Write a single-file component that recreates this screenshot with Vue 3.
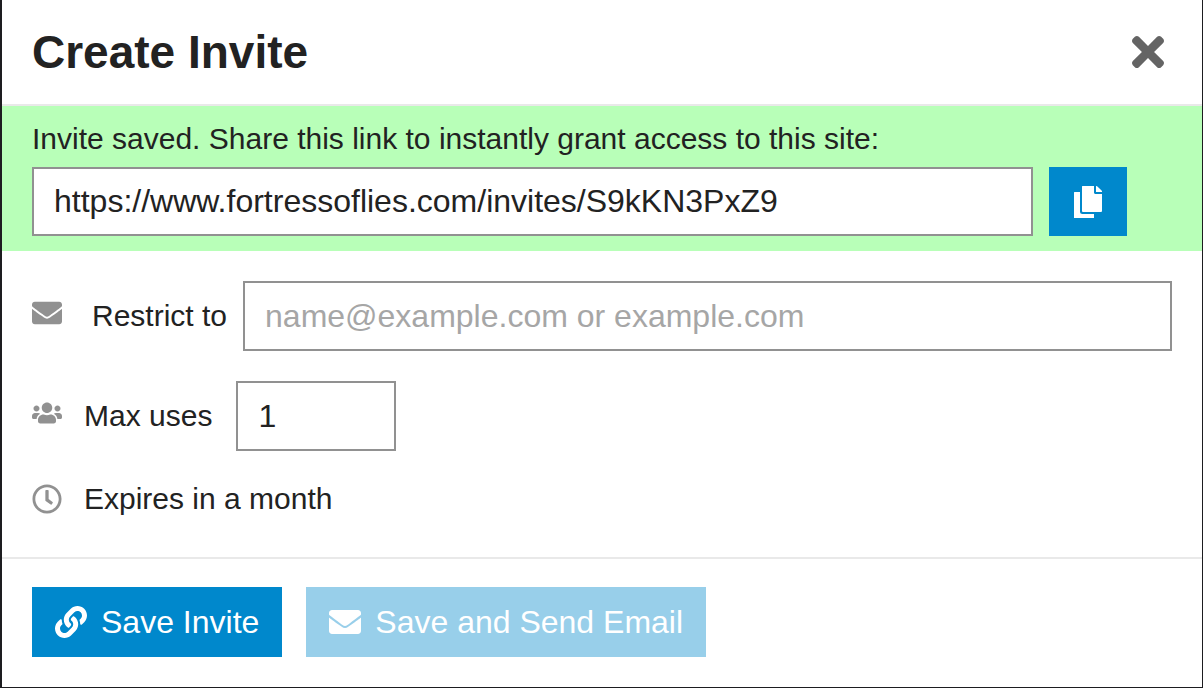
<script setup>
import { ref } from 'vue'

const link = ref('https://www.fortressoflies.com/invites/S9kKN3PxZ9')
const restrictTo = ref('')
const maxUses = ref('1')

const envelope =
  'M502.3 190.8c3.9-3.1 9.7-.2 9.7 4.7V400c0 26.5-21.5 48-48 48H48c-26.5 0-48-21.5-48-48V195.6c0-5 5.7-7.8 9.7-4.7 22.4 17.4 52.1 39.5 154.1 113.6 21.1 15.4 56.7 47.8 92.2 47.6 35.7.3 72-32.8 92.3-47.6 102-74.1 131.6-96.3 154-113.7zM256 320c23.2.4 56.6-29.2 73.4-41.4 132.7-96.3 142.8-104.7 173.4-128.7 5.8-4.5 9.2-11.5 9.2-18.9v-19c0-26.5-21.5-48-48-48H48c-26.5 0-48 21.5-48 48v19c0 7.4 3.4 14.3 9.2 18.9 30.6 23.9 40.7 32.4 173.4 128.7 16.8 12.2 50.2 41.8 73.4 41.4z'
</script>

<template>
  <section class="modal" aria-labelledby="modal-title">
    <header class="modal-header">
      <h1 id="modal-title">Create Invite</h1>
      <button type="button" class="close" aria-label="Close">
        <svg viewBox="0 80 352 352" aria-hidden="true">
          <path d="M242.72 256l100.07-100.07c12.28-12.28 12.28-32.19 0-44.48l-22.24-22.24c-12.28-12.28-32.19-12.28-44.48 0L176 189.28 75.93 89.21c-12.28-12.28-32.19-12.28-44.48 0L9.21 111.45c-12.28 12.28-12.28 32.19 0 44.48L109.28 256 9.21 356.07c-12.28 12.28-12.28 32.19 0 44.48l22.24 22.24c12.28 12.28 32.2 12.28 44.48 0L176 322.72l100.07 100.07c12.28 12.28 32.2 12.28 44.48 0l22.24-22.24c12.28-12.28 12.28-32.19 0-44.48L242.72 256z" />
        </svg>
      </button>
    </header>

    <div class="alert">
      <label for="invite-link">Invite saved. Share this link to instantly grant access to this site:</label>
      <div class="share">
        <input id="invite-link" v-model="link" class="field" type="text" readonly />
        <button type="button" class="btn copy" aria-label="Copy link">
          <svg class="btn-icon" viewBox="0 0 512 512" aria-hidden="true">
            <path d="M352 448v56a8 8 0 0 1-8 8H40a8 8 0 0 1-8-8V104a8 8 0 0 1 8-8h88v312a40 40 0 0 0 40 40h184zM352 104V0H168a8 8 0 0 0-8 8v392a16 16 0 0 0 16 16h288a16 16 0 0 0 16-16V128H376c-13.2 0-24-10.8-24-24zm121-31L407 7a24 24 0 0 0-17-7h-6v96h96v-6a24 24 0 0 0-7-17z" />
          </svg>
        </button>
      </div>
    </div>

    <form class="modal-body" @submit.prevent>
      <div class="row">
        <svg class="icon raised" viewBox="0 0 512 512" aria-hidden="true"><path :d="envelope" /></svg>
        <label class="indented" for="restrict-to">Restrict to</label>
        <input id="restrict-to" v-model="restrictTo" class="field grow" type="text" placeholder="name@example.com or example.com" />
      </div>
      <div class="row">
        <svg class="icon raised" viewBox="0 0 640 512" aria-hidden="true">
          <path d="M96 224c35.3 0 64-28.7 64-64s-28.7-64-64-64-64 28.7-64 64 28.7 64 64 64zm448 0c35.3 0 64-28.7 64-64s-28.7-64-64-64-64 28.7-64 64 28.7 64 64 64zm32 32h-64c-17.6 0-33.5 7.1-45.1 18.6 40.3 22.1 68.9 62 75.1 109.4h66c17.7 0 32-14.3 32-32v-32c0-35.3-28.7-64-64-64zm-256 0c61.9 0 112-50.1 112-112S381.9 32 320 32 208 82.1 208 144s50.1 112 112 112zm76.8 32h-8.3c-20.8 10-43.9 16-68.5 16s-47.6-6-68.5-16h-8.3C179.6 288 128 339.6 128 403.2V432c0 26.5 21.5 48 48 48h288c26.5 0 48-21.5 48-48v-28.8c0-63.6-51.6-115.2-115.2-115.2zm-223.7-13.4C161.5 263.1 145.6 256 128 256H64c-35.3 0-64 28.7-64 64v32c0 17.7 14.3 32 32 32h65.9c6.3-47.4 34.9-87.3 75.2-109.4z" />
        </svg>
        <label for="max-uses">Max uses</label>
        <input id="max-uses" v-model="maxUses" class="field uses" type="text" inputmode="numeric" />
      </div>
      <div class="row">
        <svg class="icon" viewBox="0 0 512 512" aria-hidden="true">
          <path d="M256 8C119 8 8 119 8 256s111 248 248 248 248-111 248-248S393 8 256 8zm0 448c-110.5 0-200-89.5-200-200S145.5 56 256 56s200 89.5 200 200-89.5 200-200 200zm61.8-104.4l-84.9-61.7c-3.1-2.3-4.9-5.9-4.9-9.7V116c0-6.6 5.4-12 12-12h32c6.6 0 12 5.4 12 12v141.7l66.8 48.6c5.4 3.9 6.5 11.4 2.6 16.8L334.6 349c-3.9 5.3-11.4 6.5-16.8 2.6z" />
        </svg>
        <span>Expires in a month</span>
      </div>
    </form>

    <footer class="modal-footer">
      <button type="button" class="btn">
        <svg class="btn-icon" viewBox="0 0 512 512" aria-hidden="true">
          <path d="M326.612 185.391c59.747 59.809 58.927 155.698.36 214.59-.11.12-.24.25-.36.37l-67.2 67.2c-59.27 59.27-155.699 59.262-214.96 0-59.27-59.26-59.27-155.7 0-214.96l37.106-37.106c9.84-9.84 26.786-3.3 27.294 10.606.648 17.722 3.826 35.527 9.69 52.721 1.986 5.822.567 12.262-3.783 16.612l-13.087 13.087c-28.026 28.026-28.905 73.66-1.155 101.96 28.024 28.579 74.086 28.749 102.325.51l67.2-67.19c28.191-28.191 28.073-73.757 0-101.83-3.701-3.694-7.429-6.564-10.341-8.569a16.037 16.037 0 0 1-6.947-12.606c-.396-10.567 3.348-21.456 11.698-29.806l21.054-21.055c5.521-5.521 14.182-6.199 20.584-1.731a152.482 152.482 0 0 1 20.522 17.197zM467.547 44.449c-59.261-59.262-155.69-59.27-214.96 0l-67.2 67.2c-.12.12-.25.25-.36.37-58.566 58.892-59.387 154.781.36 214.59a152.454 152.454 0 0 0 20.521 17.196c6.402 4.468 15.064 3.789 20.584-1.731l21.054-21.055c8.35-8.35 12.094-19.239 11.698-29.806a16.037 16.037 0 0 0-6.947-12.606c-2.912-2.005-6.64-4.875-10.341-8.569-28.073-28.073-28.191-73.639 0-101.83l67.2-67.19c28.239-28.239 74.3-28.069 102.325.51 27.75 28.3 26.872 73.934-1.155 101.96l-13.087 13.087c-4.35 4.35-5.769 10.79-3.783 16.612 5.864 17.194 9.042 34.999 9.69 52.721.509 13.906 17.454 20.446 27.294 10.606l37.106-37.106c59.271-59.259 59.271-155.699.001-214.959z" />
        </svg>
        <span>Save Invite</span>
      </button>
      <button type="button" class="btn" disabled>
        <svg class="btn-icon" viewBox="0 0 512 512" aria-hidden="true"><path :d="envelope" /></svg>
        <span>Save and Send Email</span>
      </button>
    </footer>
  </section>
</template>

<style>
body {
  background: #fff;
}
</style>

<style scoped>
.modal {
  box-sizing: border-box;
  border: solid #1d1d20;
  border-width: 0 1px 1px 2px;
  background: #fff;
  color: #222;
  font: 30px/36px "Liberation Sans", Arial, sans-serif;
}

svg {
  display: block;
  flex: none;
  fill: currentColor;
}

.modal-header {
  display: flex;
  align-items: center;
  justify-content: space-between;
  padding: 24px 30px;
  border-bottom: 2px solid #e9e9e9;
}

h1 {
  margin: 0;
  font-size: 46px;
  line-height: 56px;
  font-weight: 700;
}

.close {
  padding: 8px;
  border: 0;
  background: none;
  color: #646464;
}

.close svg {
  width: 32px;
  height: 32px;
}

.alert {
  padding: 15px 75px 15px 30px;
  background: #b8ffb8;
}

.alert label {
  display: block;
  margin-bottom: 10px;
}

.share {
  display: flex;
  gap: 16px;
}

.field {
  box-sizing: border-box;
  min-width: 0;
  height: 70px;
  margin: 0;
  padding: 0 20px;
  border: 2px solid #919191;
  border-radius: 0;
  background: #fff;
  color: #222;
  font: inherit;
  font-size: 32px;
}

.field::placeholder {
  color: #a6a6a6;
  opacity: 1;
}

.share .field {
  flex: 1;
  height: 69px;
}

.btn {
  display: flex;
  align-items: center;
  gap: 14px;
  height: 70px;
  margin: 0;
  padding: 0 23px;
  border: 0;
  background: #0088cc;
  color: #fff;
  font: inherit;
  font-size: 32px;
}

.btn:disabled {
  opacity: 0.4;
}

.btn-icon {
  width: 32px;
  height: 32px;
}

.copy {
  height: 69px;
}

.modal-body {
  display: flex;
  flex-direction: column;
  gap: 30px;
  padding: 30px 30px 40px;
}

.row {
  display: flex;
  align-items: center;
}

.icon {
  width: 30px;
  height: 30px;
  margin-right: 22px;
  color: #919191;
}

.raised {
  margin-bottom: 6px;
}

.indented {
  margin-left: 8px;
}

.grow {
  flex: 1;
  margin-left: 16px;
}

.uses {
  width: 160px;
  margin-left: 24px;
}

.modal-footer {
  display: flex;
  gap: 24px;
  padding: 28px 30px 30px;
  border-top: 2px solid #e9e9e9;
}
</style>
